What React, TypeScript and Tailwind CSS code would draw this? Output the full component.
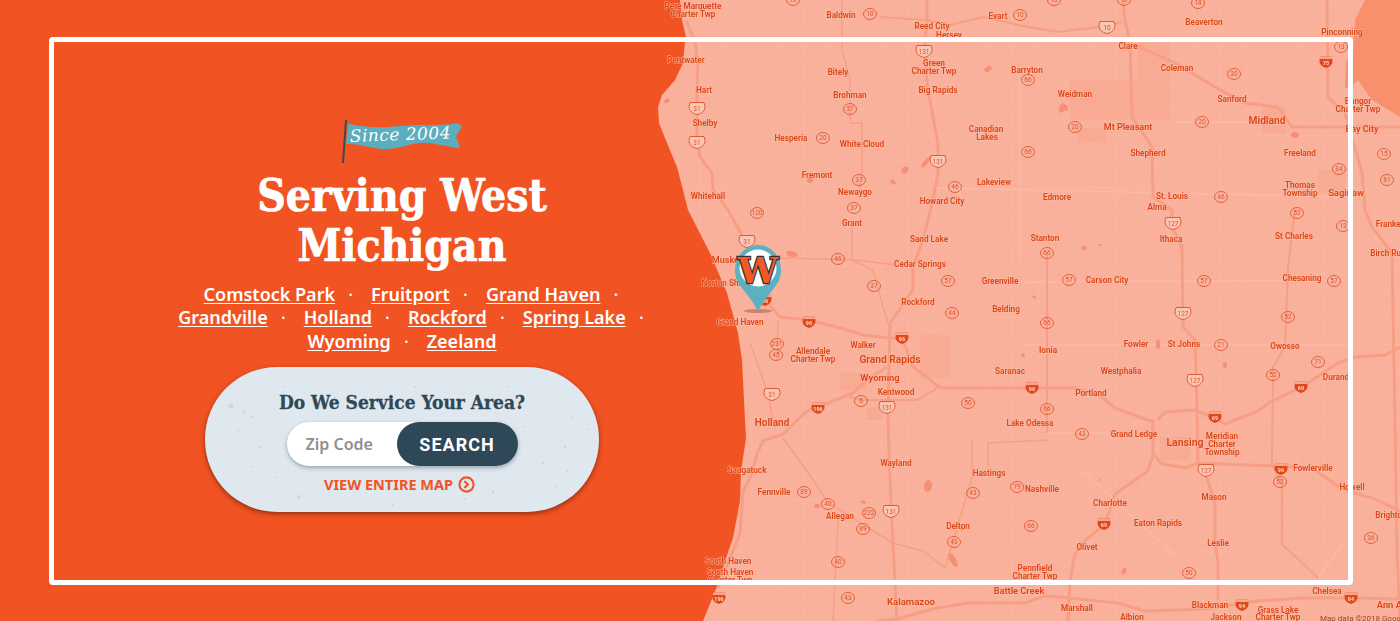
import { CircleChevronRight } from "lucide-react";

const areas = ["Comstock Park", "Fruitport", "Grand Haven", "Grandville", "Holland", "Rockford", "Spring Lake", "Wyoming", "Zeeland"];

const coast = "M0 0 L680 0 L682 20 L686 37 L685 42 L683 63 L675 80 L662 95 L658 107 L659 123 L667 143 L677 167 L683 190 L688 210 L710 253 L727 293 L738 333 L742 360 L745 420 L746 438 L741 471 L740 501 L733 538 L725 561 L718 584 L703 621 L0 621 Z";
const lake = "M1365 0 L1355 20 L1353 50 L1346 62 L1345 88 L1350 88 L1358 80 L1372 100 L1400 117 L1400 0 Z";

// [points, width]
const roads: [string, number][] = [
  ["686,20 695,42 698,63 697,90 697,140 700,157 712,173 713,190 728,210 743,237 750,253 763,297 780,317 808,320 837,327 863,335 888,338 902,338", 3],
  ["927,0 927,20 925,43 927,83 933,117 938,143 938,173 933,200 923,240 913,267 913,290 890,323 888,420 890,478 893,544 897,621", 3],
  ["902,338 913,367 937,385 940,388 1032,388 1075,388 1102,397 1115,408 1148,420 1153,421 1153,454 1162,464 1185,468 1198,463 1275,466 1312,468 1338,486 1348,491 1372,498 1400,511", 3],
  ["1153,454 1148,471 1115,494 1105,524 1082,543 1075,554 1070,581 1068,621", 3],
  ["1123,0 1125,20 1130,43 1132,117 1152,147 1153,197 1172,210 1172,227 1182,247 1183,327 1195,340 1197,411 1198,463 1207,478 1215,504 1215,544 1218,561 1218,600", 3],
  ["1130,45 1142,48 1175,63 1215,87 1245,103 1278,107 1292,127 1345,127 1400,127", 3],
  ["880,17 927,20 950,25 983,17 1028,27 1058,32 1098,27 1123,22", 2],
  ["1327,0 1328,97 1345,113 1362,173 1365,210 1372,227 1392,253 1395,420 1397,551 1400,621", 3],
  ["1158,420 1165,412 1195,410 1215,418 1225,424 1258,411 1270,402 1302,387 1338,363 1355,357 1385,355 1400,347", 3],
  ["877,621 897,619 937,608 967,603 1025,603 1045,596 1068,598 1118,603 1145,611 1205,609 1258,601 1302,598 1358,598 1400,599", 3],
  ["887,367 867,380 853,393 818,407 807,411 783,434 763,441 757,454 750,478 743,491 740,534 730,558 718,588", 3],
  ["850,397 863,400 917,400 935,390 937,385", 2],
  ["1047,253 1047,433", 2],
  ["1295,210 1288,267 1285,347 1273,367 1272,464 1282,484 1282,544 1318,578", 2],
  ["842,0 842,50 850,80 850,123 862,123 862,177 857,197", 1.5],
  ["852,227 852,260 873,270 883,307 888,323", 1.5],
  ["778,258 857,260 895,265", 1.5],
  ["783,438 807,471 827,501 857,521 893,543 923,551 945,568", 1.5],
  ["838,521 833,621", 1.5],
  ["945,568 972,478 972,440", 1.5],
  ["778,320 777,360", 1.5],
  ["750,343 767,390 773,420", 1.5],
  ["988,467 988,443 1047,440", 1.5],
];
const faintRoads = [
  "1172,122 1292,122",
  "937,188 1358,197",
  "1025,282 1348,280",
  "1025,345 1350,345",
  "1047,433 1153,433",
  "1082,470 1180,560",
  "1020,80 1020,260",
  "1318,578 1345,540",
];

const patches: [number, number, number, number][] = [
  [840, 373, 27, 17],
  [920, 335, 30, 43],
  [867, 407, 15, 13],
  [1070, 80, 100, 40],
  [1138, 43, 32, 37],
  [1077, 128, 30, 15],
  [1160, 437, 30, 23],
  [1318, 170, 27, 23],
  [1262, 107, 24, 26],
];

// [cx, cy, rx, ry, rotate]
const ponds: [number, number, number, number, number][] = [
  [988, 69, 4, 2.5, -30], [667, 101, 3, 2, -30], [792, 254, 6, 3, 15], [810, 180, 3, 3, 0], [1062, 108, 3, 5, 20],
  [1295, 135, 4, 3, 10], [1066, 108, 2, 3, 0], [926, 162, 2, 7, 40], [905, 170, 3, 4, 50], [893, 182, 3, 2, 30],
  [928, 486, 4, 6, 10], [863, 502, 3, 1.5, 20], [817, 506, 3, 2, 0], [961, 528, 3, 2, 30], [953, 560, 3, 8, -30],
  [1084, 248, 3, 2, -10], [1100, 245, 2, 1, 0], [1023, 355, 2, 2, 0], [1158, 344, 2, 5, 0], [1124, 571, 2, 4, 20],
  [1034, 297, 3, 1, 20], [1225, 365, 2, 3, 0], [1100, 480, 1, 1, 0],
];

const labels: [string, number, number, number?][] = [
  ["Pere Marquette", 693, 9], ["Charter Twp", 693, 17], ["Baldwin", 841, 18], ["Evart", 998, 19], ["Reed City", 932, 29], ["Hersey", 949, 38],
  ["Pentwater", 686, 63], ["Hart", 704, 93], ["Shelby", 705, 126], ["Bitely", 838, 75], ["Brohman", 850, 98], ["Green", 934, 66], ["Charter Twp", 934, 74],
  ["Big Rapids", 938, 93], ["Canadian", 986, 132], ["Lakes", 987, 140], ["Hesperia", 791, 141], ["White Cloud", 862, 147], ["Fremont", 817, 178], ["Newaygo", 855, 195],
  ["Howard City", 942, 204], ["Lakeview", 994, 185], ["Whitehall", 708, 199], ["Barryton", 1027, 73], ["Beaverton", 1204, 25], ["Pinconning", 1342, 35], ["Clare", 1128, 49],
  ["Coleman", 1177, 71], ["Weidman", 1075, 97], ["Sanford", 1232, 102], ["Midland", 1267, 124, 10.2], ["Mt Pleasant", 1128, 130, 9], ["Bangor", 1358, 104], ["Charter Twp", 1358, 112],
  ["Bay City", 1362, 132, 9], ["Shepherd", 1148, 156], ["Freeland", 1300, 156], ["Edmore", 1057, 200], ["St. Louis", 1172, 199], ["Alma", 1157, 210], ["Thomas", 1300, 188],
  ["Township", 1300, 196], ["Saginaw", 1346, 196, 9.4], ["Muskegon", 733, 263, 9], ["Norton Shores", 728, 286], ["Grand Haven", 740, 325], ["Grant", 852, 226], ["Sand Lake", 929, 242],
  ["Cedar Springs", 920, 267], ["Greenville", 1000, 284], ["Rockford", 918, 305], ["Belding", 1006, 312], ["Walker", 863, 348], ["Allendale", 813, 354], ["Charter Twp", 813, 362],
  ["Grand Rapids", 890, 363, 10.2], ["Wyoming", 880, 381, 9.4], ["Kentwood", 896, 395], ["Saranac", 1010, 374], ["Holland", 772, 426, 10], ["Saugatuck", 747, 473], ["Fennville", 774, 495],
  ["Allegan", 840, 519], ["Wayland", 896, 466], ["Hastings", 989, 476], ["Delton", 958, 529], ["Lake Odessa", 1030, 426], ["South Haven", 728, 564], ["South Haven", 730, 575], ["Charter Twp", 730, 583],
  ["Kalamazoo", 911, 605, 9.6], ["Battle Creek", 1019, 594, 9.2], ["Pennfield", 1035, 571], ["Charter Twp", 1035, 579], ["Nashville", 1042, 492], ["Stanton", 1045, 241], ["Ithaca", 1171, 242],
  ["St Charles", 1294, 239], ["Carson City", 1107, 283], ["Chesaning", 1302, 281], ["Ionia", 1048, 353], ["Fowler", 1136, 347], ["St Johns", 1184, 347], ["Owosso", 1285, 349], ["Westphalia", 1121, 374],
  ["Portland", 1091, 396], ["Durand", 1336, 380], ["Frankenmuth", 1400, 227], ["Birch Run", 1388, 256], ["Grand Ledge", 1134, 437], ["Lansing", 1185, 446, 10.5], ["Meridian", 1222, 439], ["Charter", 1222, 447],
  ["Township", 1222, 455], ["Fowlerville", 1313, 471], ["Howell", 1352, 490], ["Mason", 1214, 500], ["Charlotte", 1110, 506], ["Eaton Rapids", 1158, 526], ["Olivet", 1087, 550], ["Leslie", 1218, 546],
  ["Brighton", 1391, 518], ["Chelsea", 1327, 594], ["Ann Arbor", 1398, 608, 9.4], ["Marshall", 1077, 611], ["Albion", 1132, 620], ["Blackman", 1210, 608], ["Jackson", 1226, 620], ["Grass Lake", 1278, 613],
  ["Charter Twp", 1278, 620],
];

const ovals: [number, number, string][] = [
  [870, 14, "10"], [1020, 15, "10"], [850, 109, "37"], [823, 138, "20"], [859, 180, "37"], [955, 187, "46"], [854, 208, "37"], [757, 213, "120"], [1028, 152, "66"], [1028, 80, "66"],
  [1075, 127, "20"], [1202, 122, "20"], [1234, 74, "30"], [1341, 47, "13"], [1198, 3, "18"], [1221, 197, "46"], [1339, 169, "84"], [1384, 154, "15"], [1387, 180, "81"], [838, 259, "46"],
  [874, 286, "37"], [948, 281, "57"], [952, 313, "44"], [777, 344, "231"], [776, 355, "45"], [861, 401, "6"], [968, 403, "50"], [1047, 253, "66"], [1069, 280, "57"], [1204, 281, "57"],
  [1334, 281, "57"], [1047, 323, "66"], [1288, 317, "52"], [1221, 345, "21"], [1273, 375, "52"], [1318, 362, "71"], [1047, 409, "66"], [1297, 213, "52"], [1343, 226, "13"], [804, 492, "89"],
  [828, 504, "40"], [869, 513, "222"], [863, 529, "89"], [973, 493, "43"], [1017, 487, "79"], [954, 542, "43"], [838, 562, "40"], [848, 598, "43"], [1082, 434, "43"], [1031, 526, "66"],
  [1189, 573, "50"], [1280, 482, "52"], [1371, 538, "36"], [793, 0, "10"], [1054, 0, "10"], [1124, 0, "10"],
];
const usShields: [number, number, string][] = [
  [924, 51, "131"], [697, 108, "31"], [697, 142, "31"], [938, 161, "131"], [747, 241, "31"], [772, 394, "31"], [887, 407, "131"], [891, 511, "131"], [1173, 223, "127"], [1183, 313, "127"],
  [1195, 380, "127"], [1206, 470, "127"], [1107, 27, "10"],
];
const interstates: [number, number, string][] = [
  [1326, 62, "75"], [809, 322, "96"], [902, 338, "96"], [818, 408, "196"], [1032, 388, "96"], [1301, 387, "69"], [1215, 417, "69"], [1104, 524, "69"], [1281, 469, "96"], [1351, 598, "94"],
  [1242, 605, "94"], [719, 598, "196"], [765, 300, "96"],
];

const specks: [number, number, number][] = [
  [16, 39, 2.5], [29, 45, 1.5], [37, 50, 1.2], [23, 63, 1], [9, 68, 1], [45, 80, 1.2], [84, 130, 2], [140, 121, 1.5], [278, 125, 1.2], [328, 96, 1.2], [352, 104, 1], [340, 120, 1],
  [350, 80, 1.2], [200, 20, 1], [120, 30, 1], [60, 110, 1], [38, 100, 1], [294, 20, 1], [372, 62, 1], [250, 132, 1], [178, 138, 1], [310, 60, 1], [70, 20, 1], [356, 50, 1],
];

function MapBackground() {
  return (
    <svg className="absolute inset-0 blur-[0.3px]" width={1400} height={621} viewBox="0 0 1400 621">
      <rect width={1400} height={621} className="fill-[#fab19c]" />
      {Array.from({ length: 28 }, (_, i) => (
        <path key={"v" + i} d={`M${700 + i * 26} 0V621`} className="stroke-[#fbb5a1] stroke-1" />
      ))}
      {Array.from({ length: 24 }, (_, i) => (
        <path key={"h" + i} d={`M650 ${i * 26 + 6}H1400`} className="stroke-[#fbb5a1] stroke-1" />
      ))}
      {patches.map(([x, y, w, h], i) => (
        <rect key={i} x={x} y={y} width={w} height={h} className="fill-[#f9aa93]" />
      ))}
      {faintRoads.map((p, i) => (
        <polyline key={i} points={p} className="fill-none stroke-[#fcb9a6] stroke-[1.5]" />
      ))}
      {roads.map(([p, w], i) => (
        <polyline key={i} points={p} strokeWidth={w} strokeLinejoin="round" className="fill-none stroke-[#f69f85]" />
      ))}
      {ponds.map(([cx, cy, rx, ry, r], i) => (
        <ellipse key={i} cx={cx} cy={cy} rx={rx} ry={ry} transform={`rotate(${r} ${cx} ${cy})`} className="fill-[#f59073]" />
      ))}
      <path d={lake} className="fill-[#fa8f6c]" />
      <path d={coast} className="fill-[#f25322]" />

      <g className="font-['Roboto',sans-serif]">
        {ovals.map(([x, y, n], i) => (
          <g key={i}>
            <ellipse cx={x} cy={y} rx={6.5} ry={5.5} className="fill-none stroke-[#e2623a] stroke-1" />
            <text x={x} y={y + 2.3} textAnchor="middle" className="fill-[#d9552c] text-[6.5px]">{n}</text>
          </g>
        ))}
        {usShields.map(([x, y, n], i) => (
          <g key={i}>
            <path d={`M${x - 7} ${y - 5.5}h14l1 4c0 4 -3 7 -8 8c-5 -1 -8 -4 -8 -8z`} className="fill-[#fcc4b3] stroke-[#dd5c34] stroke-1" />
            <text x={x} y={y + 2.6} textAnchor="middle" className="fill-[#d9552c] text-[6.5px]">{n}</text>
          </g>
        ))}
        {interstates.map(([x, y, n], i) => (
          <g key={i}>
            <path d={`M${x - 6} ${y - 5.5}h12l0.5 5c0 3 -3 5.5 -6.5 6.5c-3.500 -1 -6.500 -3.500 -6.500 -6.500z`} className="fill-[#e2481a]" />
            <rect x={x - 6} y={y - 5.5} width={12} height={2.5} className="fill-[#f7a78f]" />
            <text x={x} y={y + 3} textAnchor="middle" className="fill-[#fcd5c8] text-[5.5px] font-bold">{n}</text>
          </g>
        ))}
        {labels.map(([t, x, y, s], i) => (
          <text
            key={i}
            x={x}
            y={y}
            fontSize={s ?? 8.2}
            textAnchor="middle"
            className="fill-[#dc4415] stroke-[#fcbfac] stroke-[0.8] [paint-order:stroke] font-semibold"
          >
            {t}
          </text>
        ))}
        <text x={1320} y={621} fontSize={8} className="fill-[#a8431f]">Map data ©2018 Google</text>
      </g>
    </svg>
  );
}

function Pin() {
  return (
    <svg className="absolute left-[730px] top-[240px]" width={56} height={76} viewBox="0 0 56 76">
      <ellipse cx={28} cy={71} rx={14} ry={2} className="fill-[#d0836c]" />
      <path d="M28 72 C24 62 17 55 10.500 46 C6.500 41 5 36 5 30 C5 16.500 15 5 28 5 C41 5 51 16.500 51 30 C51 36 49.500 41 45.500 46 C39 55 32 62 28 72 Z" className="fill-[#5cb1c0]" />
      <circle cx={28} cy={28} r={18.5} className="fill-white" />
      <text
        x={28}
        y={43}
        textAnchor="middle"
        strokeLinejoin="miter"
        className="fill-[#f05a28] stroke-[#2f3538] stroke-[2.5px] [paint-order:stroke] font-['DejaVu_Serif',serif] text-[36px] font-bold"
      >
        W
      </text>
    </svg>
  );
}

function Flag() {
  return (
    <svg width={120} height={48} viewBox="0 0 120 48" className="shrink-0">
      <path d="M4 2 L1 45" className="stroke-[#3f4a52] stroke-2" />
      <path
        d="M6 6 C18 8 34 10 46 9 C58 8 68 7 78 7 C92 7 106 7 116 5 L120 9 L114 18 L118 30 C104 29 90 24 78 25 C66 26 56 31 45 31 C30 31 16 25 4 26 Z"
        className="fill-[#5aaebd]"
      />
      <text
        x={8}
        y={24}
        transform="rotate(-2 8 24)"
        className="fill-white font-['DejaVu_Serif',serif] text-[17px] italic tracking-[0.5px]"
      >
        Since 2004
      </text>
    </svg>
  );
}

export default function App() {
  return (
    <div className="relative h-[621px] w-full overflow-hidden bg-[#f25322]">
      <MapBackground />
      <Pin />

      <main className="relative flex h-full w-[804px] flex-col items-center pt-[118px] text-white">
        <Flag />
        <h1 className="mt-[5px] w-[400px] text-center font-['DejaVu_Serif_Condensed','DejaVu_Serif',serif] text-[44px]/[50px] font-bold [-webkit-text-stroke:0.7px_white]">
          Serving West Michigan
        </h1>
        <ul className="mt-[12px] w-[500px] text-center font-['Noto_Sans',sans-serif] text-[18px]/[23.4px] font-semibold">
          {areas.map((a, i) => (
            <li key={a} className="relative mx-[18px] inline-block">
              <a className="underline underline-offset-2" href="#">{a}</a>
              {i < areas.length - 1 && <span className="absolute -right-[18px] top-0 font-normal">·</span>}
            </li>
          ))}
        </ul>

        <section className="relative mt-[14px] flex h-[145px] w-[394px] flex-col items-center rounded-[72px] bg-[#dfe8ee] pt-[22px] shadow-[0_2px_5px_rgba(60,20,0,0.55)]">
          <svg className="absolute inset-0" width={394} height={145}>
            {specks.map(([x, y, r], i) => (
              <circle key={i} cx={x + 10} cy={y} r={r} className="fill-[#ccd7de]" />
            ))}
          </svg>
          <h2 className="relative font-['DejaVu_Serif_Condensed','DejaVu_Serif',serif] text-[19px]/[26px] font-bold text-[#2f4858] [-webkit-text-stroke:0.3px_#2f4858]">
            Do We Service Your Area?
          </h2>
          <form className="relative mt-[7px] flex h-[44px] w-[231px] rounded-full bg-white shadow-[0_2px_4px_rgba(50,70,85,0.4)]">
            <input
              placeholder="Zip Code"
              className="w-[110px] rounded-l-full pl-[19px] font-['Noto_Sans',sans-serif] text-[16px] font-semibold outline-none placeholder:text-[#8f8f8f]"
            />
            <button type="button" className="h-[44px] w-[121px] rounded-full bg-[#2f4858] font-['Roboto',sans-serif] text-[18px] font-bold tracking-[1px] text-white">
              SEARCH
            </button>
          </form>
          <a href="#" className="relative mt-[8px] mr-[5px] flex items-center gap-[5px] font-['Noto_Sans',sans-serif] text-[14.5px]/[20px] font-bold text-[#f25322]">
            VIEW ENTIRE MAP
            <CircleChevronRight size={17} strokeWidth={3} />
          </a>
        </section>
      </main>

      <div className="pointer-events-none absolute bottom-[36px] left-[49px] right-[47px] top-[37px] rounded-[4px] border-[5px] border-white" />
    </div>
  );
}
